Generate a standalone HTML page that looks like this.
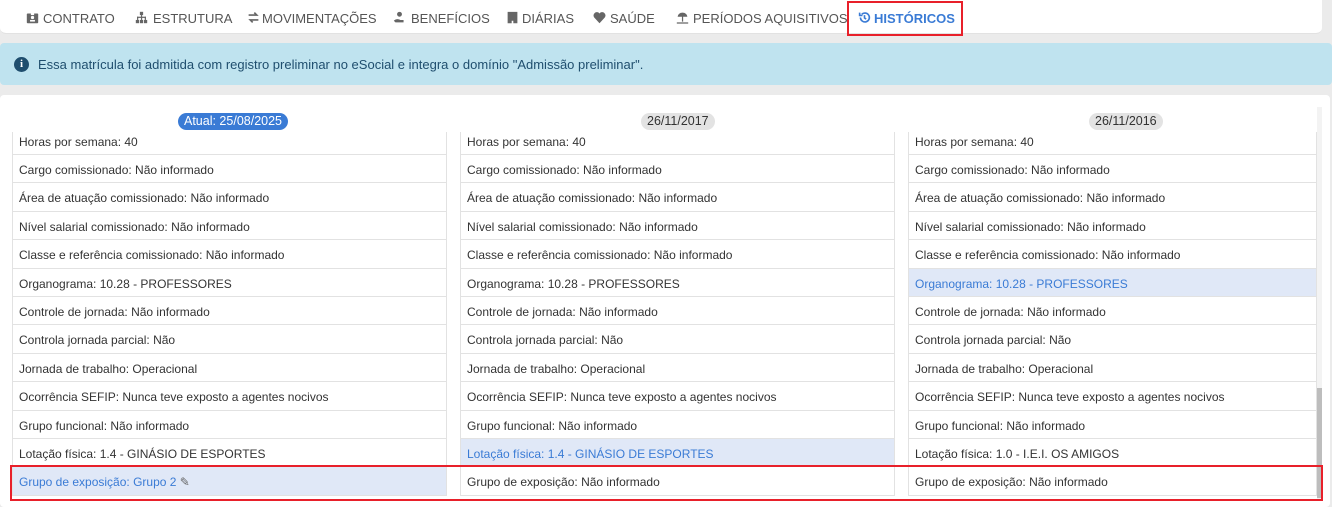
<!DOCTYPE html>
<html><head><meta charset="utf-8">
<style>
*{box-sizing:border-box;margin:0;padding:0}
body{width:1332px;height:507px;overflow:hidden;background:#ebebeb;font-family:"Liberation Sans","DejaVu Sans",sans-serif;position:relative}
.tabs{position:absolute;left:0;top:0;width:1322px;height:34px;background:#fff;border-radius:0 0 6px 6px;border-bottom:1px solid #e2e2e2}
.tab{position:absolute;top:11px;font-size:13px;color:#555;white-space:nowrap}
.ico{position:absolute;top:11px;width:13px;height:13px;fill:#666}
.tab.act{color:#3a7bd5;font-weight:bold}
.redtab{position:absolute;left:847px;top:1px;width:116px;height:35px;border:2px solid #e8202a}
.alert{position:absolute;left:0;top:43px;width:1332px;height:42px;background:#bfe3ef;border-radius:4px}
.alert .ic{position:absolute;left:14px;top:14px;width:15px;height:15px;border-radius:50%;background:#1f4e6e;color:#fff;font:bold 11px "Liberation Serif",serif;text-align:center;line-height:15px}
.alert .t{position:absolute;left:38px;top:14px;font-size:13px;color:#1f4e6e}
.card{position:absolute;left:0;top:95px;width:1330px;height:412px;background:#fff;border-radius:4px}
.badge{position:absolute;top:113px;height:17px;border-radius:9px;font-size:12.5px;line-height:17px;padding:0 6px}
.b1{background:#3a7bd5;color:#fff;left:178px}
.b2{background:#e3e3e3;color:#333;left:641px}
.b3{background:#e3e3e3;color:#333;left:1089px}
.clip{position:absolute;top:132px;left:0;width:1332px;height:375px;overflow:hidden}
.col{position:absolute;top:-5.4px;border-left:1px solid #e2e2e2;border-right:1px solid #e2e2e2}
.row{height:28.4px;border-bottom:1px solid #e2e2e2;font-size:12px;color:#333;padding-left:6px;padding-top:1px;line-height:28px;white-space:nowrap}
.row.hl{background:#e0e8f7;color:#3a7bd5}
.sb{position:absolute;left:1317px;top:107px;width:5px;height:393px;background:#f3f3f3}
.sb i{position:absolute;left:0;top:281px;width:5px;height:110px;background:#bdbdbd}
.redrow{position:absolute;left:10px;top:465px;width:1313px;height:36px;border:2px solid #e8202a}
</style></head><body>
<div class="tabs">
<svg class="ico" style="left:26px" viewBox="0 0 16 16"><rect x="1" y="3" width="14" height="12" rx="1"/><rect x="6" y="1" width="4" height="4" fill="#fff"/><circle cx="8" cy="8" r="2" fill="#fff"/><rect x="5" y="11" width="6" height="2" fill="#fff"/></svg><div class="tab" style="left:43px">CONTRATO</div>
<svg class="ico" style="left:135px" viewBox="0 0 16 16"><rect x="6" y="1" width="4" height="4"/><rect x="1" y="11" width="4" height="4"/><rect x="6" y="11" width="4" height="4"/><rect x="11" y="11" width="4" height="4"/><rect x="2.5" y="7" width="11" height="1.5"/><rect x="7.3" y="5" width="1.5" height="6"/><rect x="2.5" y="7" width="1.5" height="4"/><rect x="12" y="7" width="1.5" height="4"/></svg><div class="tab" style="left:153px">ESTRUTURA</div>
<svg class="ico" style="left:247px" viewBox="0 0 16 16"><path d="M2 5h10l-3-3M14 11H4l3 3" stroke="#666" stroke-width="2" fill="none"/></svg><div class="tab" style="left:262px">MOVIMENTAÇÕES</div>
<svg class="ico" style="left:393px" viewBox="0 0 16 16"><circle cx="8" cy="4" r="3"/><path d="M1 12c3-3 6-2 8-1h4v3H3z"/></svg><div class="tab" style="left:411px">BENEFÍCIOS</div>
<svg class="ico" style="left:506px" viewBox="0 0 16 16"><path d="M2 1h12v14H9v-3H7v3H2z"/></svg><div class="tab" style="left:522px">DIÁRIAS</div>
<svg class="ico" style="left:593px" viewBox="0 0 16 16"><path d="M8 15L1.5 8A4 4 0 0 1 8 3a4 4 0 0 1 6.5 5z"/></svg><div class="tab" style="left:610px">SAÚDE</div>
<svg class="ico" style="left:676px" viewBox="0 0 16 16"><path d="M2 7a6 5 0 0 1 12 0zM7.3 7h1.5v6H7.3zM1 14h14v1.5H1z"/></svg><div class="tab" style="left:693px">PERÍODOS AQUISITIVOS</div>
<svg class="ico" style="left:858px;fill:none;stroke:#3a7bd5" viewBox="0 0 16 16" stroke-width="2"><path d="M3 8a5.5 5.5 0 1 0 1.6-3.9M2 2v3.5h3.5M8 5v3.5l2 1.5"/></svg><div class="tab act" style="left:874px">HISTÓRICOS</div>
</div>
<div class="redtab"></div>
<div class="alert"><div class="ic">i</div><div class="t">Essa matrícula foi admitida com registro preliminar no eSocial e integra o domínio "Admissão preliminar".</div></div>
<div class="card"></div>
<div class="badge b1">Atual: 25/08/2025</div>
<div class="badge b2">26/11/2017</div>
<div class="badge b3">26/11/2016</div>
<div class="clip">
<div class="col" style="left:12px;width:435px">
<div class="row">Horas por semana: 40</div>
<div class="row">Cargo comissionado: Não informado</div>
<div class="row">Área de atuação comissionado: Não informado</div>
<div class="row">Nível salarial comissionado: Não informado</div>
<div class="row">Classe e referência comissionado: Não informado</div>
<div class="row">Organograma: 10.28 - PROFESSORES</div>
<div class="row">Controle de jornada: Não informado</div>
<div class="row">Controla jornada parcial: Não</div>
<div class="row">Jornada de trabalho: Operacional</div>
<div class="row">Ocorrência SEFIP: Nunca teve exposto a agentes nocivos</div>
<div class="row">Grupo funcional: Não informado</div>
<div class="row">Lotação física: 1.4 - GINÁSIO DE ESPORTES</div>
<div class="row hl">Grupo de exposição: Grupo 2 <span style="color:#666">✎</span></div>
</div>
<div class="col" style="left:460px;width:435px">
<div class="row">Horas por semana: 40</div>
<div class="row">Cargo comissionado: Não informado</div>
<div class="row">Área de atuação comissionado: Não informado</div>
<div class="row">Nível salarial comissionado: Não informado</div>
<div class="row">Classe e referência comissionado: Não informado</div>
<div class="row">Organograma: 10.28 - PROFESSORES</div>
<div class="row">Controle de jornada: Não informado</div>
<div class="row">Controla jornada parcial: Não</div>
<div class="row">Jornada de trabalho: Operacional</div>
<div class="row">Ocorrência SEFIP: Nunca teve exposto a agentes nocivos</div>
<div class="row">Grupo funcional: Não informado</div>
<div class="row hl">Lotação física: 1.4 - GINÁSIO DE ESPORTES</div>
<div class="row">Grupo de exposição: Não informado</div>
</div>
<div class="col" style="left:908px;width:409px">
<div class="row">Horas por semana: 40</div>
<div class="row">Cargo comissionado: Não informado</div>
<div class="row">Área de atuação comissionado: Não informado</div>
<div class="row">Nível salarial comissionado: Não informado</div>
<div class="row">Classe e referência comissionado: Não informado</div>
<div class="row hl">Organograma: 10.28 - PROFESSORES</div>
<div class="row">Controle de jornada: Não informado</div>
<div class="row">Controla jornada parcial: Não</div>
<div class="row">Jornada de trabalho: Operacional</div>
<div class="row">Ocorrência SEFIP: Nunca teve exposto a agentes nocivos</div>
<div class="row">Grupo funcional: Não informado</div>
<div class="row">Lotação física: 1.0 - I.E.I. OS AMIGOS</div>
<div class="row">Grupo de exposição: Não informado</div>
</div>
</div>
<div class="sb"><i></i></div>
<div class="redrow"></div>
</body></html>
